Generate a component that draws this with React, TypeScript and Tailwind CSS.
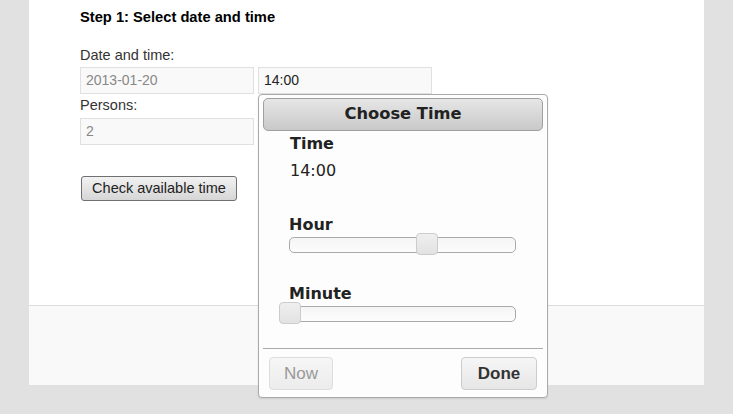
import React from "react";

const sliders = [
  { label: "Hour", value: 14, max: 23 },
  { label: "Minute", value: 0, max: 59 },
];

function Slider({ label, value, max }: { label: string; value: number; max: number }) {
  const pct = (value / max) * 100;
  return (
    <div className="pl-[30px] pr-[27px]">
      <div className="text-[16px] leading-[20px] font-bold text-[#222] font-['DejaVu_Sans',sans-serif]">
        {label}
      </div>
      <div className="relative mt-[2px] h-[16px] rounded-[5px] border border-[#aaa] bg-gradient-to-b from-[#f5f5f5] to-[#fdfdfd]">
        <div
          className="absolute top-[-5px] h-[22px] w-[22px] rounded-[4px] border border-[#ccc] bg-gradient-to-b from-[#efefef] to-[#e2e2e2]"
          style={{ left: `calc(${pct}% - 11px)` }}
        />
      </div>
    </div>
  );
}

export default function App() {
  return (
    <div className="relative h-[414px] w-[733px] overflow-hidden bg-[#e1e1e1] font-['Liberation_Sans',Arial,sans-serif]">
      <div className="ml-[29px] w-[675px]">
        {/* Form */}
        <div className="h-[305px] bg-white pl-[51px] pt-[8px]">
          <h3 className="text-[14.7px] leading-[18px] font-bold text-black">
            Step 1: Select date and time
          </h3>
          <div className="mt-[20px] text-[14.5px] leading-[18px] text-[#333]">Date and time:</div>
          <div className="mt-[3px] flex gap-[4px]">
            <div className="flex h-[27px] w-[174px] items-center border border-[#e0e0e0] bg-[#f9f9f9] px-[5px] text-[14px] text-[#888]">
              2013-01-20
            </div>
            <div className="flex h-[27px] w-[174px] items-center border border-[#e0e0e0] bg-[#f9f9f9] px-[5px] text-[14px] text-[#222]">
              14:00
            </div>
          </div>
          <div className="mt-[2px] text-[14.5px] leading-[18px] text-[#333]">Persons:</div>
          <div className="mt-[4px] flex h-[27px] w-[174px] items-center border border-[#e0e0e0] bg-[#f9f9f9] px-[5px] text-[14px] text-[#888]">
            2
          </div>
          <button className="ml-[1px] mt-[31px] flex h-[25px] w-[156px] items-center justify-center rounded-[3px] border border-[#707070] bg-gradient-to-b from-[#f2f2f2] to-[#d6d6d6] text-[14.5px] text-[#222]">
            Check available time
          </button>
        </div>
        {/* Footer */}
        <div className="h-[80px] border-t border-[#dcdcdc] bg-[#f9f9f9]" />
      </div>

      {/* Time picker popup */}
      <div className="absolute left-[258px] top-[94px] h-[304px] w-[290px] rounded-[4px] border border-[#aaa] bg-[#fdfdfd] px-[4px] pt-[3px] shadow-[0_1px_2px_rgba(0,0,0,0.1)]">
        <div className="flex h-[33px] items-center justify-center rounded-[5px] border border-[#a0a0a0] bg-gradient-to-b from-[#e6e6e6] to-[#c9c9c9] text-[16.3px] font-bold text-[#222] font-['DejaVu_Sans',sans-serif]">
          Choose Time
        </div>
        <div className="ml-[-4px] mt-[3px] pl-[31px]">
          <div className="text-[16px] leading-[20px] font-bold text-[#222] font-['DejaVu_Sans',sans-serif]">
            Time
          </div>
          <div className="mt-[7px] text-[16px] leading-[20px] text-[#222] font-['DejaVu_Sans',sans-serif]">
            14:00
          </div>
        </div>
        <div className="ml-[-4px] mt-[34px] flex flex-col gap-[31px]">
          {sliders.map((s) => (
            <Slider key={s.label} {...s} />
          ))}
        </div>
        <div className="mt-[26px] border-t border-[#aaa]" />
        <div className="mt-[8px] flex justify-between px-[6px]">
          <button className="flex h-[33px] w-[64px] items-center justify-center rounded-[4px] border border-[#ddd] bg-gradient-to-b from-[#f6f6f6] to-[#ececec] text-[17px] text-[#999]">
            Now
          </button>
          <button className="flex h-[33px] w-[76px] items-center justify-center rounded-[4px] border border-[#ccc] bg-gradient-to-b from-[#f6f6f6] to-[#e6e6e6] text-[17px] font-bold text-[#333]">
            Done
          </button>
        </div>
      </div>
    </div>
  );
}
